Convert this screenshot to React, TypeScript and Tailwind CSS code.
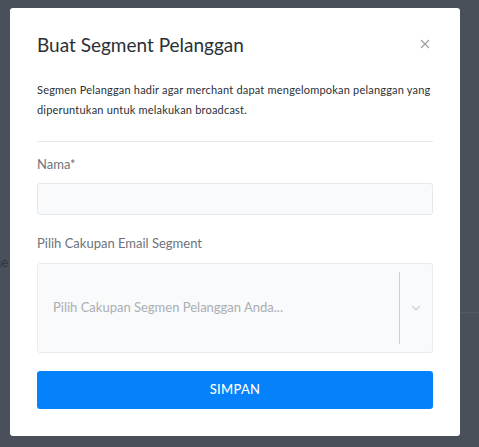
import { ChevronDown } from "lucide-react";

const font = { fontFamily: "Lato, 'Noto Sans', sans-serif" };

export default function App() {
  return (
    <div
      className="relative h-[447px] w-[479px] overflow-hidden bg-[#495059] pt-[8px] pl-[10px]"
      style={font}
    >
      {/* dimmed page text behind the overlay */}
      <span className="absolute left-[-6px] top-[253px] text-[13px] text-[#2f353c]">ne</span>
      <div className="absolute right-0 top-[312px] h-px w-[19px] bg-[#525962]" />

      <div className="relative w-[450px] h-[428px] rounded-[3px] bg-white px-[27px] pt-[25px]">
        <div className="flex items-center justify-between h-[24px]">
          <h2 className="text-[19px] leading-[24px] text-[#2b3036]">Buat Segment Pelanggan</h2>
          <button className="mr-[3px] mt-[-2px] text-[#9a9ea3]" aria-label="Close">
            <svg width="10" height="10" viewBox="0 0 10 10" stroke="currentColor" strokeWidth="1.1">
              <line x1="1" y1="1" x2="9" y2="9" />
              <line x1="9" y1="1" x2="1" y2="9" />
            </svg>
          </button>
        </div>

        <p className="mt-[23px] text-[11px] leading-[20px] tracking-[0.2px] text-[#2b3036]">
          Segmen Pelanggan hadir agar merchant dapat mengelompokan pelanggan yang diperuntukan untuk
          melakukan broadcast.
        </p>

        <div className="mt-[21px] h-px bg-[#e6e8ea]" />

        <label className="mt-[12px] block text-[13px] leading-[20px] text-[#6c737a]">Nama*</label>
        <input
          className="mt-[9px] block h-[32px] w-full rounded-[3px] border border-[#e4e9ee] bg-[#f9fafb] px-3 text-[13px] outline-none"
          type="text"
        />

        <label className="mt-[18px] block text-[13px] leading-[20px] text-[#6c737a]">
          Pilih Cakupan Email Segment
        </label>
        <div className="mt-[10px] flex h-[90px] items-center rounded-[3px] border border-[#e8ebee] bg-[#f9fafb]">
          <span className="flex-1 pl-[15px] text-[13px] text-[#a9aeb3]">
            Pilih Cakupan Segmen Pelanggan Anda...
          </span>
          <div className="h-[72px] w-px bg-[#cdd0d3]" />
          <div className="flex w-[32px] justify-center text-[#cdd0d3]">
            <ChevronDown size={14} strokeWidth={2} />
          </div>
        </div>

        <button className="mt-[18px] flex h-[38px] w-full items-center justify-center rounded-[3px] bg-[#0582f9] text-[13px] font-medium tracking-[0.3px] text-white">
          SIMPAN
        </button>
      </div>
    </div>
  );
}
